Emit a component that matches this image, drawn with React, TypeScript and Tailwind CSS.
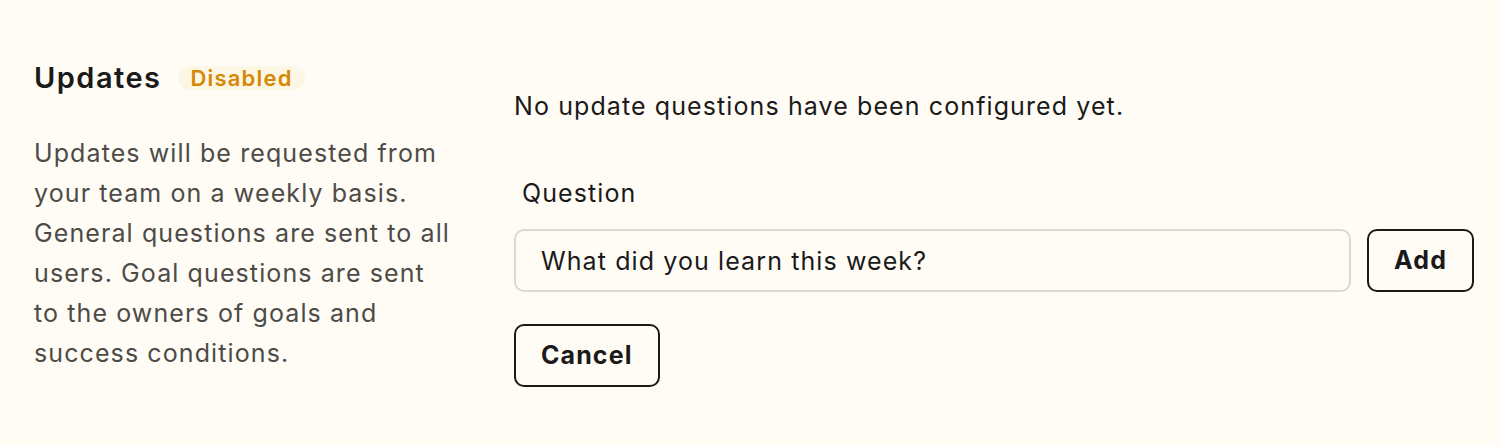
export default function App() {
  return (
    <div className="min-h-[446px] w-full bg-[#fffcf5] font-['Inter',sans-serif] text-[#1a1a1a]">
      <div className="flex gap-16 pl-[34px] pr-[26px] pt-[58px]">
        <div className="w-[416px] shrink-0">
          <div className="flex items-center gap-[17px]">
            <h2 className="text-[29px] font-semibold leading-[39px] tracking-[0.05em] text-[#1a1a1a]">Updates</h2>
            <span className="rounded-full bg-[#fcf7e4] px-3 text-[22px] font-semibold leading-[24px] tracking-[0.055em] text-[#d48806]">
              Disabled
            </span>
          </div>
          <p className="mt-[36px] text-[25px] leading-[40px] tracking-[0.044em] text-[#4d4b48]">
            Updates will be requested from your team on a weekly basis. General questions are sent to all users. Goal
            questions are sent to the owners of goals and success conditions.
          </p>
        </div>

        <div className="flex-1 pt-[28px] text-[25px] tracking-[0.044em]">
          <p className="leading-[40px]">No update questions have been configured yet.</p>
          <label className="mt-[47px] block pl-2 leading-[40px]">Question</label>
          <div className="mt-[16px] flex gap-4">
            <input
              className="h-[63px] flex-1 rounded-[10px] border-2 border-[#dcd9d2] bg-transparent px-[25px] text-[25px] tracking-[0.044em] text-[#1a1a1a] outline-none"
              defaultValue="What did you learn this week?"
            />
            <button className="h-[63px] rounded-[10px] border-2 border-[#1a1a1a] px-[25px] font-bold">
              Add
            </button>
          </div>
          <button className="mt-[32px] h-[63px] rounded-[10px] border-2 border-[#1a1a1a] px-[25px] font-bold">
            Cancel
          </button>
        </div>
      </div>
    </div>
  )
}
